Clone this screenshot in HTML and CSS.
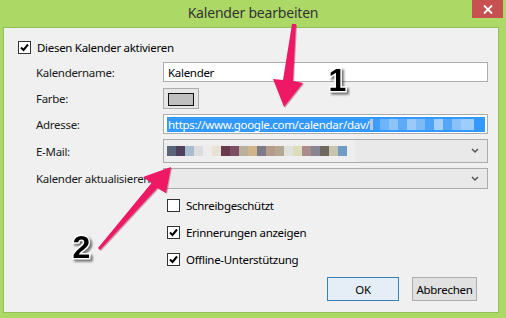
FILE: index.html
```html
<!DOCTYPE html>
<html>
<head>
  <meta name="viewport" content="width=device-width, initial-scale=1.0">
  <title>Kalender bearbeiten</title>
  <link rel="stylesheet" href="styles.css">
</head>
<body>
  <div class="window">
    <div class="titlebar">
      <span></span>
      <div class="title">Kalender bearbeiten</div>
      <div class="close">
        <svg width="10" height="9" viewBox="0 0 10 9"><path d="M1 0.5 L9 8.5 M9 0.5 L1 8.5" stroke="#fff" stroke-width="1.8"/></svg>
      </div>
    </div>

    <div class="client">
      <div class="check top-check">
        <span class="box"><svg width="11" height="11" viewBox="0 0 11 11"><path d="M2 5.5 L4.5 8 L9 2.5" fill="none" stroke="#000" stroke-width="2"/></svg></span>
        <span>Diesen Kalender aktivieren</span>
      </div>

      <div class="fields">
        <div class="label">Kalendername:</div>
        <div class="input">Kalender</div>

        <div class="label">Farbe:</div>
        <div><div class="color-btn"><span class="swatch"></span></div></div>

        <div class="label">Adresse:</div>
        <div class="input address"><span class="sel">https://www.google.com/calendar/dav/<span class="blur-blue"></span></span></div>

        <div class="label">E-Mail:</div>
        <div class="select tall"><span class="blur-mail"></span><svg class="chev" width="8" height="6" viewBox="0 0 8 6"><path d="M1 1 L4 4 L7 1" fill="none" stroke="#555" stroke-width="1.5"/></svg></div>

        <div class="label">Kalender aktualisieren</div>
        <div class="select"><span></span><svg class="chev" width="8" height="6" viewBox="0 0 8 6"><path d="M1 1 L4 4 L7 1" fill="none" stroke="#555" stroke-width="1.5"/></svg></div>
      </div>

      <div class="options">
        <div class="check">
          <span class="box"></span>
          <span>Schreibgeschützt</span>
        </div>
        <div class="check">
          <span class="box"><svg width="11" height="11" viewBox="0 0 11 11"><path d="M2 5.5 L4.5 8 L9 2.5" fill="none" stroke="#000" stroke-width="2"/></svg></span>
          <span>Erinnerungen anzeigen</span>
        </div>
        <div class="check">
          <span class="box"><svg width="11" height="11" viewBox="0 0 11 11"><path d="M2 5.5 L4.5 8 L9 2.5" fill="none" stroke="#000" stroke-width="2"/></svg></span>
          <span>Offline-Unterstützung</span>
        </div>
      </div>

      <div class="actions">
        <div class="btn default">OK</div>
        <div class="btn">Abbrechen</div>
      </div>
    </div>

    <!-- annotation arrows drawn over the dialog -->
    <svg class="marks" width="506" height="318" viewBox="0 0 506 318">
      <polygon class="arrow" points="292,24 296,24 293,81 303,83 284,107 273,79 283,80"/>
      <polygon class="arrow" points="98,248 151.5,183 143,177 171,167 166,193 157.5,188 100,250"/>
      <text class="num" x="337.5" y="91" text-anchor="middle">1</text>
      <text class="num" x="81.5" y="258" text-anchor="middle">2</text>
    </svg>
  </div>
</body>
</html>
```

FILE: styles.css
```css
body {
  margin: 0;
  font-family: "Noto Sans", "Open Sans", sans-serif;
  font-size: 11.5px;
  letter-spacing: -0.3px;
  color: #000;
  background: #acd866;
}
.window {
  position: relative;
  width: 506px;
  height: 318px;
  display: flex;
  flex-direction: column;
}
.titlebar {
  height: 27px;
  flex: none;
  display: grid;
  grid-template-columns: 1fr auto 1fr;
}
.title {
  font-size: 14px;
  letter-spacing: -0.2px;
  color: #333;
  line-height: 26px;
}
.close {
  justify-self: end;
  width: 31px;
  height: 18px;
  margin-right: 3px;
  background: #c75050;
  display: flex;
  align-items: center;
  justify-content: center;
}
.client {
  flex: 1;
  margin: 0 7px 5px 3px;
  background: #f0f0f0;
  border: 1px solid #94bf58;
  display: flex;
  flex-direction: column;
}

/* checkboxes */
.check {
  display: flex;
  align-items: center;
  gap: 6px;
  height: 17px;
}
.box {
  width: 11px;
  height: 11px;
  border: 1px solid #333;
  background: #fff;
  flex: none;
}
.box svg {
  display: block;
}
.top-check {
  margin: 11px 0 0 14px;
}

/* form grid */
.fields {
  margin: 6px 0 0 32px;
  display: grid;
  grid-template-columns: 127px 325px;
  grid-template-rows: 20px 22px 20px 24px 21px;
  row-gap: 5px;
  align-items: center;
}
.label {
  color: #1a1a1a;
  white-space: nowrap;
}
.input {
  height: 20px;
  box-sizing: border-box;
  border: 1px solid #acacac;
  background: #fff;
  padding-left: 4px;
  display: flex;
  align-items: center;
}
.address {
  padding-left: 3px;
}
.sel {
  display: flex;
  align-items: center;
  width: 318px;
  height: 15px;
  background: #3399ff;
  color: #fff;
  padding-left: 1px;
  box-sizing: border-box;
  white-space: nowrap;
  overflow: hidden;
}
.blur-blue {
  flex: none;
  width: 104px;
  height: 11px;
  margin-left: 1px;
  background: linear-gradient(90deg, #b8c8de 0 3px, #3d9cff 3px 10px, #6fb3f8 10px 19px, #8ec3f6 19px 28px,
    #5daafa 28px 37px, #9acaf7 37px 46px, #7cbaf8 46px 55px, #4fa3fb 55px 64px, #a4d0f8 64px 73px,
    #55a6fb 73px 82px, #8ac2f7 82px 91px, #9dcdf8 91px 104px);
}
.select {
  height: 100%;
  box-sizing: border-box;
  border: 1px solid #acacac;
  background: #e9e9e9;
  display: flex;
  align-items: center;
  justify-content: space-between;
  padding-right: 8px;
}
.blur-mail {
  align-self: stretch;
  width: 188px;
  display: flex;
  align-items: center;
  padding-left: 3px;
  background: #eeeeee;
}
.blur-mail::before {
  content: "";
  width: 180px;
  height: 10px;
  background: linear-gradient(90deg, #5a6478 0 9px, #4e3f5a 9px 18px, #a7bcd0 18px 27px, #dcdcdc 27px 36px,
    #ececea 36px 45px, #e8e2d4 45px 54px, #6b3a4a 54px 63px, #7d4e66 63px 72px, #b8b09a 72px 81px,
    #cfb48c 81px 90px, #7e7a8a 90px 99px, #b49c88 99px 108px, #b4a894 108px 117px, #dde3dc 117px 126px,
    #dcdcb8 126px 135px, #ab8c8c 135px 144px, #888590 144px 153px, #706860 153px 162px,
    #c8c4b0 162px 171px, #6e9cc4 171px 180px);
}
.color-btn {
  width: 36px;
  height: 21px;
  box-sizing: border-box;
  border: 1px solid #adadad;
  background: #e6e6e6;
  padding: 4px;
}
.swatch {
  display: block;
  height: 11px;
  border: 1px solid #111;
  background: #c0c0c0;
}

/* options + buttons */
.options {
  margin: 8px 0 0 163px;
  display: flex;
  flex-direction: column;
  gap: 10px;
}
.actions {
  margin-top: 9px;
  padding-right: 21px;
  display: flex;
  justify-content: flex-end;
  gap: 13px;
}
.btn {
  width: 65px;
  height: 24px;
  box-sizing: border-box;
  border: 1px solid #adadad;
  background: #e1e1e1;
  display: flex;
  align-items: center;
  justify-content: center;
}
.btn.default {
  width: 72px;
  border-color: #3c7fb1;
  background: #e5eef7;
}

/* annotations */
.marks {
  position: absolute;
  left: 0;
  top: 0;
  pointer-events: none;
}
.arrow {
  fill: #ef1865;
  filter: drop-shadow(1px 1px 0 rgba(120, 0, 40, 0.35));
}
.num {
  font-family: "Liberation Sans", Arial, sans-serif;
  font-weight: bold;
  font-size: 32px;
  letter-spacing: 0;
  fill: #000;
  stroke: #fff;
  stroke-width: 3px;
  paint-order: stroke;
  filter: drop-shadow(2px 2px 1px rgba(0, 0, 0, 0.55));
}
```
